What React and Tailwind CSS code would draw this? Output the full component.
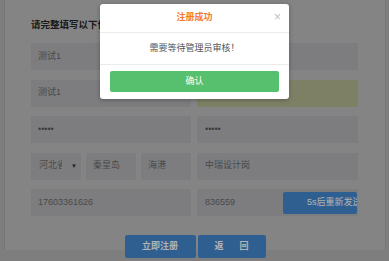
export default function App() {
  const field = "h-[27px] bg-[#b3b4b8] flex items-center text-[9px] text-[#6a6a6a] overflow-hidden whitespace-nowrap";
  return (
    <div className="relative w-[389px] h-[261px] bg-[#b5b5b5] overflow-hidden font-['Liberation_Sans','Noto_Sans_CJK_SC',sans-serif]">
      <div className="ml-[4px] w-[382px] h-[250px] border-x border-[#aaaaaa] bg-[#bebebe] pl-[26px] pt-[18px]">
        <div className="text-[9.5px] leading-[14px] font-bold text-[#262626]">请完整填写以下信息</div>
        <div className="mt-[11px] grid grid-cols-[160px_161px] gap-x-[6px] gap-y-[9.5px]">
          <div className={field + " pl-[7px]"}>测试1</div>
          <div className={field + " pl-[8px]"}></div>
          <div className={field + " pl-[7px]"}>测试1</div>
          <div className={field + " pl-[8px] bg-[#b5b892]"}></div>
          <div className={field + " pl-[7px] text-[#555]"}>•••••</div>
          <div className={field + " pl-[8px] text-[#555]"}>•••••</div>
          <div className="grid grid-cols-3 gap-x-[5px]">
            <div className={field + " pl-[8px] pr-[4px] justify-between"}>
              <span className="w-[23px] overflow-hidden">河北省</span>
              <span className="text-[6px] text-[#333]">▼</span>
            </div>
            <div className={field + " pl-[7px]"}>秦皇岛</div>
            <div className={field + " pl-[7px]"}>海港</div>
          </div>
          <div className={field + " pl-[8px]"}>中瑞设计岗</div>
          <div className={field + " pl-[7px]"}>17603361626</div>
          <div className={field + " pl-[8px] pr-[1px] justify-between"}>
            <span>836559</span>
            <div className="w-[74px] h-[22px] rounded-[2px] bg-[#4389cf] text-white overflow-hidden whitespace-nowrap pl-[24px] flex items-center text-[9px]">5s后重新发送</div>
          </div>
        </div>
        <div className="relative z-10 mt-[19px] -ml-[26px] flex justify-center gap-[2px]">
          <div className="w-[71px] h-[23px] rounded-[2px] bg-[#4389cf] text-white font-bold text-[9px] flex items-center justify-center">立即注册</div>
          <div className="w-[68px] h-[23px] rounded-[2px] bg-[#4389cf] text-white font-bold text-[9px] flex items-center justify-center gap-[16px]"><span>返</span><span>回</span></div>
        </div>
      </div>
      <div className="absolute inset-0 bg-black/30 z-20"></div>
      <div className="absolute z-30 left-[100px] top-[4px] w-[189px] h-[95px] bg-white rounded-[3px] shadow-[0_1px_4px_rgba(0,0,0,0.3)] flex flex-col">
        <div className="relative h-[29px] border-b border-[#ebebeb] flex items-center justify-center">
          <span className="text-[9px] font-bold text-[#f47a2c]">注册成功</span>
          <span className="absolute right-[8px] top-[7px] text-[12px] leading-[12px] text-[#c0c0c0]">×</span>
        </div>
        <div className="h-[32px] border-b border-[#ebebeb] flex items-center justify-center text-[9px] text-[#555]">需要等待管理员审核！</div>
        <div className="flex-1 px-[10px] pt-[6px]">
          <div className="h-[21px] rounded-[2px] bg-[#57c06f] text-white text-[9px] flex items-center justify-center">确认</div>
        </div>
      </div>
    </div>
  );
}
